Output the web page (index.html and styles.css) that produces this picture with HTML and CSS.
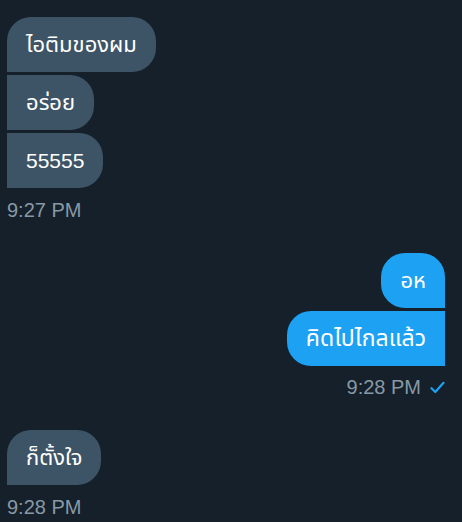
FILE: index.html
```html
<!DOCTYPE html>
<html lang="th">
<head>
<meta charset="utf-8">
<link rel="stylesheet" href="styles.css">
</head>
<body>
<div class="chat">
  <div class="group in">
    <div class="bubble first">ไอติมของผม</div>
    <div class="bubble mid">อร่อย</div>
    <div class="bubble last num">55555</div>
    <div class="time">9:27 PM</div>
  </div>
  <div class="group out">
    <div class="bubble first">อห</div>
    <div class="bubble last wide">คิดไปไกลแล้ว</div>
    <div class="time">9:28 PM
      <svg class="check" width="15" height="13" viewBox="0 0 15 13"><path d="M1.5 7.2 L5.3 11 L13.5 1.8" fill="none" stroke="#1da1f2" stroke-width="2.2" stroke-linecap="round" stroke-linejoin="round"/></svg>
    </div>
  </div>
  <div class="group in">
    <div class="bubble first">ก็ตั้งใจ</div>
    <div class="time">9:28 PM</div>
  </div>
</div>
</body>
</html>
```

FILE: styles.css
```css
html, body {
  margin: 0;
  padding: 0;
  background: #15202b;
}
body {
  font-family: "Liberation Sans", "Noto Sans Thai", "Noto Sans", sans-serif;
  color: #ffffff;
}
.chat {
  padding: 17px 17px 0 7px;
  display: flex;
  flex-direction: column;
  gap: 31px;
}
.group {
  display: flex;
  flex-direction: column;
  gap: 3px;
}
.group.in { align-items: flex-start; }
.group.out { align-items: flex-end; }
.bubble {
  font-size: 22px;
  line-height: 27px;
  padding: 14px 19px;
  border-radius: 24px;
}
.bubble.num { font-size: 21px; }
.bubble.wide { font-size: 23px; }
.in .bubble { background: #3d5466; }
.out .bubble { background: #1da1f2; }
.in .bubble.first { border-bottom-left-radius: 0; }
.in .bubble.mid { border-radius: 0 24px 24px 0; }
.in .bubble.last { border-radius: 0 24px 24px 0; }
.out .bubble.first { border-bottom-right-radius: 0; }
.out .bubble.last { border-radius: 24px 0 0 24px; }
.time {
  margin-top: 7px;
  font-size: 20px;
  line-height: 24px;
  color: #8899a6;
  display: flex;
  align-items: center;
  gap: 9px;
}
.out .time { margin-top: 6px; }
.check { display: block; }
```
